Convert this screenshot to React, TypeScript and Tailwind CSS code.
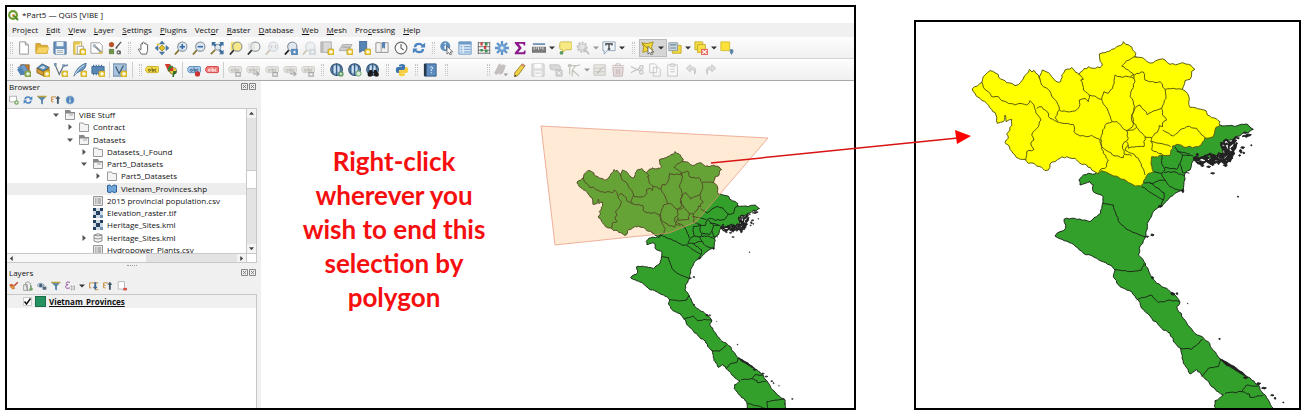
import React from "react";

/* ---------- map geometry ---------- */

const noise = (x: number, y: number) => {
  const s = Math.sin(x * 12.9898 + y * 78.233) * 43758.5453;
  return s - Math.floor(s) - 0.5;
};

/* Turns a coarse outline into a ragged, survey-like boundary. */
function rough(points: string, amount = 5, close = false): string {
  const p = points.trim().split(/\s+/).map((s) => s.split(",").map(Number));
  if (close) p.push(p[0]);
  let d = `M${p[0][0]},${p[0][1]}`;
  for (let i = 1; i < p.length; i++) {
    const [x0, y0] = p[i - 1];
    const [x1, y1] = p[i];
    const len = Math.hypot(x1 - x0, y1 - y0);
    const n = Math.max(1, Math.round(len / 8));
    for (let k = 1; k < n; k++) {
      const t = k / n;
      const o = noise(x0 + k * 3, y1 + k * 7) * amount;
      const x = x0 + (x1 - x0) * t - ((y1 - y0) / len) * o;
      const y = y0 + (y1 - y0) * t + ((x1 - x0) / len) * o;
      d += `L${x.toFixed(1)},${y.toFixed(1)}`;
    }
    d += `L${x1},${y1}`;
  }
  return close ? d + "Z" : d;
}

const NORTH =
  "37,176 52,168 66,157 70,140 82,128 90,122 105,128 115,134 122,147 140,158 165,167 182,157 190,147 200,132 208,118 216,126 222,121 228,130 240,148 241,135 247,120 258,125 275,140 295,157 302,155 305,135 315,120 335,113 345,125 357,133 368,122 385,110 400,115 420,113 427,102 419,85 418,72 435,68 455,58 470,50 482,46 490,35 497,43 510,48 517,58 528,70 524,80 530,82 550,84 562,95 580,98 600,88 615,90 630,103 655,102 668,98 685,103 705,118 695,124 690,148 675,152 667,178 682,190 688,208 690,232 712,236 738,242 742,255 762,264 780,275 780,287 768,292 760,320 735,324 728,336 715,350 680,352 650,343 638,348 630,376 610,376 575,380 573,402 580,425 560,437 550,460 542,468 520,465 490,448 455,435 440,427 425,422 415,432 395,420 380,405 360,400 345,385 320,380 300,385 285,395 270,402 265,420 255,422 245,412 230,408 222,400 205,400 195,388 175,385 165,375 150,358 145,345 135,337 145,325 140,312 150,300 155,280 155,268 138,275 135,255 130,275 112,280 108,255 95,238 80,220 60,205 45,190";

const SOUTH =
  "357,450 365,440 385,430 405,432 425,415 470,420 540,440 560,420 560,360 620,350 640,320 720,320 750,290 780,285 800,287 830,288 860,282 870,292 880,298 868,306 845,312 825,325 800,330 785,345 790,370 760,380 740,385 725,385 705,378 695,400 690,420 675,430 672,455 670,480 645,490 625,508 600,530 585,540 575,558 562,580 558,615 550,632 538,655 535,675 552,695 565,720 577,745 590,760 620,775 645,795 660,817 650,830 670,865 700,905 745,935 755,955 780,987 820,1010 855,1035 875,1050 895,1065 905,1085 925,1110 940,1135 963,1159 998,1182 1001,1220 1001,1260 824,1260 821,1190 786,1159 763,1130 765,1112 790,1095 755,1070 730,1040 710,1018 690,1032 670,1000 662,955 645,940 630,910 605,895 575,865 545,835 535,810 515,785 480,770 460,740 465,720 450,705 410,685 370,670 335,640 285,618 300,605 317,595 312,568 335,565 390,575 410,560 422,550 428,520 430,500 400,485 400,465 390,455 375,460 360,465";

const NORTH_BORDERS = [
  "66,157 70,172 85,185 95,200 115,200 125,212 145,220 165,225 180,220 200,225 210,212 222,225 228,250 243,270 235,290 215,315 222,330 212,342 222,358 200,365 197,390",
  "230,235 245,230 262,245 270,265 290,275 340,283 342,305 360,318 380,320 395,316 420,328 425,350 445,365 465,378 490,383 495,372 515,378",
  "240,148 245,165 265,178 275,198 290,215 298,240 285,262 293,275",
  "298,240 320,245 345,243 358,230 358,210 375,205 385,215 388,195 370,180 368,165 362,150 370,148 357,133",
  "388,195 405,198 425,208 430,222 445,245 457,275 440,280 428,300 422,325",
  "425,208 432,185 445,190 458,175 465,135 480,140 505,140 522,145 518,130 510,125 485,108 500,92 530,80",
  "522,145 525,155 515,180 510,200 520,215 522,235 515,255 520,275 518,290 500,302 485,290 470,275 457,275",
  "500,302 505,325 488,345 492,372 ",
  "512,140 530,130 550,126 555,150 585,158 600,155 615,178 618,205 605,235 580,243 562,255 552,240 540,225 525,235 516,255 515,270 530,292 555,320 575,323 595,300 597,287 608,290 610,275 620,270 607,255 605,235",
  "615,178 640,175 667,178",
  "608,300 640,318 660,300 680,290 710,295 725,315 735,324",
  "575,323 572,335 600,340 632,350",
  "575,335 575,360 610,376",
  "555,320 552,350 530,350 505,355 500,335",
  "505,345 495,360 515,370 535,385 545,410 555,435",
  "500,302 520,300 530,292",
  "422,325 425,350 430,370 445,390 440,410 420,420 415,432",
];

const SOUTH_BORDERS = [
  "428,520 460,525 468,555 480,580 505,600 540,615 558,622",
  "465,718 510,725 545,720 552,700",
  "545,470 575,490 610,510 600,530",
  "605,375 605,400 615,420 605,430 580,425",
  "615,412 650,418 660,400 668,375 655,365 645,350",
  "668,375 700,378",
  "660,402 668,428 688,430",
  "612,428 640,425 672,437",
  "605,430 615,450 630,470 650,478 670,480",
  "550,458 580,460 600,450 615,450",
  "570,458 600,480 612,488 610,510",
  "650,365 690,372",
  "530,810 575,795 595,817 630,810 660,815",
  "660,955 695,958 728,928",
  "725,1040 745,1015 775,1010 782,988",
  "795,1090 845,1085 860,1065 895,1068",
  "845,1085 868,1092 870,1102 910,1095",
  "824,1197 870,1209 916,1225 914,1190 995,1178",
];

/* x, y, width, height of the small offshore islands */
const ISLANDS = [
  [700, 380, 18, 12], [712, 392, 22, 14], [728, 378, 20, 16], [742, 388, 24, 20], [752, 372, 16, 14],
  [764, 384, 22, 12], [775, 372, 24, 16], [786, 392, 18, 10], [795, 378, 24, 18], [792, 356, 18, 18],
  [804, 364, 20, 18], [812, 350, 16, 12], [820, 340, 10, 16], [785, 335, 18, 12], [788, 348, 12, 10],
  [802, 340, 14, 8], [818, 328, 12, 8], [846, 316, 20, 6], [858, 312, 16, 6], [850, 306, 10, 4],
  [790, 402, 12, 8], [740, 408, 12, 5], [722, 404, 10, 6], [842, 350, 12, 6], [838, 358, 8, 12],
  [848, 366, 6, 6], [836, 374, 6, 5], [872, 344, 4, 4], [752, 428, 12, 4], [708, 370, 8, 8],
  [772, 396, 6, 8], [832, 498, 4, 4], [664, 478, 8, 10], [595, 526, 12, 6], [572, 612, 10, 6],
  [558, 618, 8, 4], [632, 788, 12, 8], [648, 788, 6, 6], [682, 820, 2, 2], [776, 925, 5, 4],
  [574, 740, 7, 7], [850, 1040, 14, 6], [890, 1058, 12, 6], [905, 1072, 14, 5], [932, 1094, 10, 4],
  [942, 1102, 6, 6], [968, 1116, 4, 3], [1028, 1176, 8, 4], [996, 1198, 4, 4],
];

const islandPath = ISLANDS.map(([x, y, w, h]) =>
  rough(`${x},${y + h / 2} ${x + w / 3},${y} ${x + w},${y + h / 3} ${x + w / 1.5},${y + h}`, 6, true),
).join("");

/* The crowded archipelago of the bay, drawn as tangled shorelines. */
const BAY = [
  "700,382 716,390 734,382 748,394 768,384 790,390 812,376 826,352 832,338",
  "708,394 730,398 752,402 772,394 800,398 812,388",
  "722,384 742,376 764,382 786,374 800,362 810,342 826,334",
  "784,336 786,352 798,358 794,374 812,368",
  "790,334 806,336 820,330 838,326",
];
const bayPath = BAY.map((b) => rough(b, 16)).join("");

const LAGOON = "780,987 800,997 822,1008 845,1026 858,1038 840,1030 815,1014 795,1003";

const northD = rough(NORTH, 6, true);
const southD = rough(SOUTH, 5, true);
const northLines = NORTH_BORDERS.map((b) => rough(b, 5)).join("");
const southLines = SOUTH_BORDERS.map((b) => rough(b, 4)).join("");

function Provinces({ transform, selected }: { transform: string; selected: boolean }) {
  return (
    <g transform={transform} strokeLinejoin="round">
      <path d={southD} fill="#33a02c" stroke="#1c2b1a" vectorEffect="non-scaling-stroke" />
      <path d={southLines} fill="none" stroke="#1c2b1a" vectorEffect="non-scaling-stroke" />
      <path
        d={northD}
        fill={selected ? "#ffff00" : "#33a02c"}
        stroke={selected ? "#5c5c10" : "#1c2b1a"}
        vectorEffect="non-scaling-stroke"
      />
      <path d={northLines} fill="none" stroke={selected ? "#5c5c10" : "#1c2b1a"} vectorEffect="non-scaling-stroke" />
      <path d={bayPath} fill="none" stroke="#222" strokeWidth="6" />
      <path d={islandPath} fill="#222" stroke="#222" strokeWidth="3" />
      <path d={rough(LAGOON, 2, true)} fill="#222" stroke="#222" strokeWidth="2" />
    </g>
  );
}

/* ---------- icons ---------- */

const Plus = ({ c = "#e9c832" }: { c?: string }) => (
  <g>
    <rect x="9" y="9" width="7" height="7" rx="1.5" fill={c} stroke="#a98c1c" strokeWidth=".6" />
    <path d="M12.5 10.3v4.4M10.3 12.5h4.4" stroke="#fff" strokeWidth="1.3" />
  </g>
);

const Lens = ({ fill = "#dfe7ef", ring = "#7d8a96", handle = "#8a7434" }: { fill?: string; ring?: string; handle?: string }) => (
  <g>
    <path d="M5.5 10.5 1 15.5" stroke={handle} strokeWidth="2" />
    <circle cx="9.5" cy="6.5" r="5.3" fill={fill} stroke={ring} strokeWidth="1.2" />
  </g>
);

const Tag = ({ fill, stroke = "#999", text = "#555" }: { fill: string; stroke?: string; text?: string }) => (
  <g>
    <path d="M0 7.5 2.5 4H14q1.5 0 1.5 1.5v4q0 1.5-1.5 1.5H2.5z" fill={fill} stroke={stroke} strokeWidth="1" />
    <circle cx="5" cy="8.3" r="1.2" fill="none" stroke={text} />
    <path d="M8 5v4.4M8 7.5h1.8v1.9H8M13 7h-1.700v2.400H13" stroke={text} fill="none" strokeWidth=".9" />
  </g>
);

const Globe = () => (
  <g>
    <circle cx="7.5" cy="7.5" r="6.7" fill="#7da2c6" stroke="#2d4d70" strokeWidth="1.2" />
    <path d="M7.500 1v13M3.500 2.500q-2 5 0 10M11.500 2.500q2 5 0 10" stroke="#23476d" fill="none" strokeWidth=".9" />
    <path d="M4.500 3h2v8h-2zM8.700 4h2v6h-2z" fill="#d3e3f1" />
  </g>
);

const Cursor = () => <path d="M8 6v9l2-2 1.500 3 1.600-.8L11.700 12.500h2.800z" fill="#fff" stroke="#444" strokeWidth=".8" />;

const icons: Record<string, React.ReactNode> = {
  New: <path d="M3 1h6.500l3.500 3.500V15H3zM9.500 1v3.500H13" fill="#fff" stroke="#8c8c8c" />,
  Open: (
    <>
      <path d="M1 3h5l1 2h7v9H1z" fill="#dcae37" stroke="#c29627" />
      <path d="M3.500 7H16l-2.500 7H1z" fill="#f6d365" stroke="#dcae37" strokeWidth=".6" />
    </>
  ),
  Save: (
    <>
      <path d="M1 1h14v14H2l-1-1z" fill="#6790bb" stroke="#4c7099" />
      <path d="M4 1h8v5H4zM3 9h10v6H3z" fill="#edf2f7" />
      <path d="M4.500 11h7M4.500 13h7" stroke="#9aa" />
    </>
  ),
  "New Print Layout": (
    <>
      <path d="M2 1h9v14H2z" fill="#fff8dc" stroke="#b99a2e" />
      <path d="M2 1h7v3H2zM2 4h2v11H2z" fill="#e6c548" />
      <path d="M6 6h7v9H6z" fill="#fff" stroke="#999" />
      <Plus />
    </>
  ),
  "Layout Manager": (
    <>
      <path d="M1 2h10l3 3v9H1z" fill="#fff" stroke="#999" />
      <path d="M5 5.500 13 13" stroke="#8b9299" strokeWidth="2.200" />
      <circle cx="5" cy="5.500" r="2" fill="#aeb6bd" />
      <path d="m9 13 4 2 2-3" fill="#e2bd3d" />
    </>
  ),
  "Style Manager": (
    <>
      <circle cx="4" cy="4" r="3" fill="#b8552c" />
      <path d="M15 1 9 8" stroke="#555" strokeWidth="1.500" />
      <path d="M1 9h6v6H1z" fill="#6f8f4c" />
      <path d="m8 9 2-2 1 1z" fill="#333" />
      <circle cx="12" cy="13" r="1.700" fill="none" stroke="#555" strokeWidth="1.200" />
      <path d="M14 11v4" stroke="#555" strokeWidth="1.200" />
    </>
  ),
  "Pan Map": (
    <path d="M5 15 1.500 9.500q.5-1.500 2.300.2L4.500 10V3.500q1-1.300 1.800 0V2q1-1.500 1.900 0v.8q1.200-1.200 2 .2v1q1.300-1 1.900.3V11l-1.300 4z" fill="#fff" stroke="#444" strokeWidth=".9" />
  ),
  "Pan to Selection": (
    <>
      <path d="M8 4.500 11.500 8 8 11.500 4.500 8z" fill="#e3c22f" stroke="#a58b18" />
      <path d="M8 0l3 3.500H5zM8 16l3-3.500H5zM0 8l3.500-3v6zM16 8l-3.500-3v6z" fill="#4b79ab" stroke="#2f5c8c" strokeWidth=".5" />
      <path d="M2 3h3v2H2z" fill="#e3c22f" />
    </>
  ),
  "Zoom In": (
    <>
      <Lens />
      <path d="M9.500 3.500v6M6.500 6.500h6" stroke="#2f69a5" strokeWidth="1.800" />
    </>
  ),
  "Zoom Out": (
    <>
      <Lens />
      <path d="M6.500 6.500h6" stroke="#2f69a5" strokeWidth="1.800" />
    </>
  ),
  "Zoom Full": (
    <>
      <path d="M1 15 6 10" stroke="#8a7434" strokeWidth="2" />
      <circle cx="9" cy="7" r="3.500" fill="#dfe7ef" stroke="#7d8a96" />
      <path d="M2 1h5L5.500 2.500l2 2-2 2-2-2L2 6zM15.500 1v5L14 4.500l-2 2-2-2 2-2L10.500 1zM15.500 15h-5l1.500-1.500-2-2 2-2 2 2 1.500-1.500z" fill="#3d6f9f" />
    </>
  ),
  "Zoom to Selection": (
    <>
      <path d="M2 1h10v10H2z" fill="#f4e16c" />
      <Lens fill="#f6e886" handle="#333" />
    </>
  ),
  "Zoom to Layer": (
    <>
      <Lens fill="#f1f1ee" handle="#333" />
      <path d="M1 2h8v8H1z" fill="#ddd" opacity=".6" />
    </>
  ),
  "Zoom to Native Resolution": (
    <g opacity=".35">
      <Lens />
      <path d="M7 4.500v4M9.500 5v.8M9.500 7.500v.8M12 4.500v4" stroke="#555" />
    </g>
  ),
  "Zoom Last": (
    <>
      <Lens handle="#222" />
      <path d="M8 9h8v7H8z" fill="#5b8bbd" />
      <path d="m13 10.500-3 2 3 2z" fill="#fff" />
    </>
  ),
  "Zoom Next": (
    <g opacity=".35">
      <Lens />
      <path d="M8 9h8v7H8z" fill="#9ab" />
      <path d="m11 10.500 3 2-3 2z" fill="#fff" />
    </g>
  ),
  "New Map View": (
    <>
      <path d="M1 1h12v12H1z" fill="#d9d9d9" stroke="#aaa" />
      <path d="M1 1h3v12H1z" fill="#bbb" />
      <Plus />
    </>
  ),
  "New 3D Map View": (
    <>
      <path d="M4 4h11l-4 7H0z" fill="#cfcfcf" stroke="#aaa" />
      <path d="M4 7h9" stroke="#999" />
      <Plus />
    </>
  ),
  "New Bookmark": (
    <>
      <path d="M3 0h8v13l-4-2.500L3 13z" fill="#5684b4" stroke="#3f6a98" />
      <Plus />
    </>
  ),
  "Show Bookmarks": (
    <>
      <path d="M1 2h5l2 1 2-1h5v11H1z" fill="#f2f2f2" stroke="#8a8a8a" />
      <path d="M8 1h3.500v8L9.700 7.500 8 9z" fill="#5684b4" />
      <path d="M7 3v10" stroke="#999" />
    </>
  ),
  "Temporal Controller": (
    <>
      <circle cx="8" cy="8" r="6.700" fill="#fafafa" stroke="#6c6c6c" strokeWidth="1.300" />
      <path d="M8 3.500V8l3 2.500" stroke="#555" fill="none" strokeWidth="1.200" />
    </>
  ),
  Refresh: (
    <>
      <path d="M2 7q.5-5 6-5 3 0 4.500 2L15 2v5.500H9.500L11 6Q10 4.500 8 4.500 5 4.500 4.800 7z" fill="#4b84c0" />
      <path d="M14 9q-.5 5-6 5-3 0-4.500-2L1 14V8.500h5.500L5 10q1 1.500 3 1.500 3 0 3.200-2.500z" fill="#4b84c0" />
    </>
  ),
  "Identify Features": (
    <>
      <circle cx="6" cy="6" r="5.700" fill="#5f8fbf" />
      <path d="M6 5v4.500M6 2.300v1.500" stroke="#fff" strokeWidth="1.700" />
      <Cursor />
    </>
  ),
  "Open Attribute Table": (
    <>
      <path d="M1 1h14v14H1z" fill="#dcebf8" stroke="#5f8fbf" />
      <path d="M1 1h14v3H1z" fill="#6c9bc8" />
      <path d="M3 6.500h2M3 9.500h2M3 12.500h2M7 6.500h7M7 9.500h7M7 12.500h7" stroke="#5f8fbf" />
    </>
  ),
  "Statistical Summary": (
    <>
      <path d="M1.500 1v14M14.500 1v14M1 2h14M1 14h14M1 6.500h14M1 10.500h14" stroke="#666" fill="none" />
      <path d="M4 1.500h2.500V5H4zM8 5.500h2.500V9H8z" fill="#cc3b3b" />
      <path d="M9 1.500h3V5H9zM4 9h2.500v3H4zM9 10h3v3H9z" fill="#3b8c4e" />
    </>
  ),
  Toolbox: (
    <>
      <path d="M8 0v16M0 8h16M2.300 2.300l11.400 11.400M13.700 2.300 2.300 13.700" stroke="#5d92c9" strokeWidth="2.600" />
      <circle cx="8" cy="8" r="4.700" fill="#6f9fd0" />
      <circle cx="8" cy="8" r="2" fill="#dfeaf5" />
    </>
  ),
  "Show Statistics": <path d="M2 1h12v4h-1.500q-.3-1.800-2-1.800H6.500L10 8l-4 4.800h5q1.700 0 2-2H14.500L14 15H2v-1.500L6.500 8 2 2.500z" fill="#8c1a8c" />,
  "Measure Line": (
    <>
      <path d="M1 3.500h14" stroke="#3f6a98" strokeWidth="1.500" />
      <path d="M0 7h16v6H0z" fill="#7d7d7d" stroke="#555" strokeWidth=".6" />
      <path d="M2.500 7v3M5 7v2M7.500 7v3M10 7v2M12.500 7v3" stroke="#eee" />
    </>
  ),
  "Map Tips": (
    <>
      <path d="M4 1h10q2 0 2 2v5q0 2-2 2H9l-4 3 .5-3H4Q2 10 2 8V3q0-2 2-2z" fill="#f5ea83" stroke="#c8b640" />
      <circle cx="4" cy="13.500" r="2.200" fill="#5d9960" />
    </>
  ),
  "Run Feature Action": (
    <g opacity=".4">
      <circle cx="7" cy="7" r="5" fill="none" stroke="#777" strokeWidth="2.500" strokeDasharray="2.500 1.200" />
      <circle cx="7" cy="7" r="3.500" fill="#ccc" stroke="#888" />
      <path d="m9 9 6 6" stroke="#777" strokeWidth="2" />
    </g>
  ),
  "Text Annotation": (
    <>
      <path d="M1 1h14v10H6l-3.500 4V11H1z" fill="#eef4f9" stroke="#8aa0b3" />
      <path d="M4.500 5V3.300h7V5M8 3.300v6M6.500 9.300h3" stroke="#333" strokeWidth="1.400" fill="none" />
    </>
  ),
  "Select Features": (
    <>
      <path d="M1 2l6 1 7-2-2 6 2 6-6-2-6 2 1-6z" fill="#f2d936" stroke="#a38d1d" />
      <path d="M2 3l9 9" stroke="#8a761a" />
      <Cursor />
    </>
  ),
  "Select by Value": (
    <>
      <path d="M5 5h10v9H5z" fill="#f2da3c" stroke="#c3a92a" />
      <path d="M1 2h10v9H1z" fill="#cfd6da" stroke="#8793a0" />
      <path d="M2.500 4.500h7M2.500 8h7" stroke="#6a87a3" strokeWidth="1.400" />
    </>
  ),
  "Deselect Features": (
    <>
      <path d="M1 1h9v9H1z" fill="#f5df45" stroke="#c3a92a" />
      <path d="M4 4h9v9H4z" fill="#f5df45" stroke="#c3a92a" />
      <path d="M8 9h8v7H8z" fill="#e66a5d" />
      <path d="m9.500 10.500 5 4M14.500 10.500l-5 4" stroke="#fff" strokeWidth="1.300" />
    </>
  ),
  "Select by Location": (
    <>
      <path d="M1 1h10v10H1z" fill="#fbe13a" stroke="#d3ba2c" />
      <path d="M13 9q2.500 0 2.500 2.300 0 1.700-2.500 4.700-2-3-2-4.700Q11 9 13 9z" fill="#5d86a8" />
    </>
  ),
  "Data Source Manager": (
    <>
      <path d="M4 2h10v9H4z" fill="#c07a2e" stroke="#6f4a1c" strokeWidth=".7" />
      <path d="m1 5 7-3.500 6 9L7 13z" fill="#6f9cc8" stroke="#3f6a98" strokeWidth=".6" />
      <path d="M0 7 5 5l5 8-6 1z" fill="#4f82b5" />
      <Plus c="#7cae55" />
    </>
  ),
  "New GeoPackage Layer": (
    <>
      <path d="m1 6 6-5 8 4-6 5z" fill="#5c8db8" stroke="#37597a" />
      <path d="M1 6v5l8 4v-5zM9 10l6-5v5l-6 5z" fill="#cf9c35" stroke="#7a5a1a" strokeWidth=".8" />
      <path d="m4 5 4-2 3 2-3 2z" fill="#fff" opacity=".7" />
      <Plus />
    </>
  ),
  "New Shapefile Layer": (
    <>
      <path d="M1 1.500 6 13 11 3h4" stroke="#5f6d7a" fill="none" strokeWidth="1.300" />
      <path d="M0 0h3v3H0zM9.500 1.500h3v3h-3zM14 1.500h2v2h-2z" fill="#7795b3" />
      <Plus />
    </>
  ),
  "New SpatiaLite Layer": (
    <>
      <path d="M1 15Q4 4 15 0q0 7-6 9T1 15z" fill="#6c97c2" stroke="#466d96" />
      <path d="M2 13Q6 6 13 2" stroke="#dce8f3" fill="none" />
      <Plus />
    </>
  ),
  "New Memory Layer": (
    <>
      <path d="M3 2v12M6 2v12M9 2v12M12 2v12" stroke="#4c7099" strokeWidth="1.400" />
      <path d="M1 4h14v8H1z" fill="#5886b5" stroke="#3f6a98" />
      <Plus />
    </>
  ),
  "New Virtual Layer": (
    <>
      <path d="M0 1h15v14H0z" fill="#a9c4dc" stroke="#55789b" />
      <path d="M3 4 7 12l5-9" stroke="#3b5a78" fill="none" strokeWidth="1.400" />
      <Plus />
    </>
  ),
  "Layer Labeling": <Tag fill="#f6e04a" stroke="#c8ac22" text="#554a10" />,
  "Layer Diagram": (
    <>
      <path d="M1 1 7 1l3 7-5 2z" fill="#d33a2c" />
      <path d="M6 3h4l1 8H7L4 8z" fill="#2f8a34" />
      <circle cx="10.500" cy="9" r="4" fill="#f1cf3b" stroke="#444" strokeWidth=".6" />
      <path d="M10.500 9V5a4 4 0 0 0-4 4z" fill="#c7352b" />
      <path d="M10.500 9h4a4 4 0 0 1-3 4v3h-2z" fill="#2c6f2e" />
    </>
  ),
  "Pin Labels": (
    <>
      <Tag fill="#a8cbea" stroke="#5687b5" text="#2d567f" />
      <circle cx="12" cy="12.500" r="3" fill="#c93434" />
    </>
  ),
  "Show Unplaced Labels": <Tag fill="#f07b7b" stroke="#d23b3b" text="#fff" />,
  "Web Add": (
    <>
      <Globe />
      <circle cx="12.500" cy="12.500" r="3" fill="#4d9154" />
      <path d="M12.500 10.800v3.400M10.800 12.500h3.400" stroke="#fff" />
    </>
  ),
  "Web Search": (
    <>
      <Globe />
      <circle cx="12" cy="12" r="3" fill="#d4ead2" stroke="#5e9a60" />
    </>
  ),
  "Web Browse": (
    <>
      <Globe />
      <path d="M4 8h3v2h2V8h3l2 6H9v-3H7.500v3H2z" fill="#1c1c1c" />
      <circle cx="4.500" cy="13" r="2.700" fill="#1c1c1c" />
      <circle cx="12" cy="13" r="2.700" fill="#1c1c1c" />
    </>
  ),
  "Python Console": (
    <>
      <path d="M8 1q3.500 0 3.500 2v3.500q0 1.500-1.500 1.500H6q-1.500 0-1.500 2v1.500H3q-2 0-2-3.500t2-3.500h5V4H4.500V3Q4.500 1 8 1z" fill="#3f76ad" />
      <path d="M8 15q-3.500 0-3.500-2V9.500Q4.500 8 6 8h4q1.500 0 1.500-2V4.500H13q2 0 2 3.500t-2 3.500H8v.5h3.500v1Q11.500 15 8 15z" fill="#f5ce42" />
    </>
  ),
  "Help Contents": (
    <>
      <path d="M2 1h13v14H2z" fill="#5c8cc0" stroke="#33597f" />
      <path d="M1 1h3v14H1z" fill="#26384c" />
      <path d="M8 5.500Q8.300 4.500 9.500 4.500q1.500 0 1.500 1.300 0 1-1.500 1.900v1.500M9.500 10.500v1.200" stroke="#fff" fill="none" />
    </>
  ),
  "Current Edits": (
    <g opacity=".45">
      <path d="M6 1 1 11l1 2 3-1 4-9zM10 2 6 11l1 2 3-2 3-8z" fill="#8b7c7c" stroke="#8b7c7c" />
      <path d="M11 12h5l-2.500 3z" fill="#333" />
    </g>
  ),
  "Toggle Editing": (
    <>
      <path d="M11.500 1 15 3 7 14l-4 2V11.500z" fill="#efd047" stroke="#93802b" />
      <path d="m3 16 .5-2.500L5 14.500z" fill="#333" />
      <path d="m11.500 1 3 2-1 1.500-3-2z" fill="#d8838b" />
    </>
  ),
  "Save Edits": (
    <g opacity=".4">
      <path d="M1 1h14v14H1z" fill="#bbb" stroke="#888" />
      <path d="M4 1h8v5H4zM4 9h8v6H4z" fill="#fff" />
      <path d="M5 11.500h6" stroke="#777" />
    </g>
  ),
  "Add Feature": (
    <g opacity=".4">
      <path d="M1 2h9q3 0 3 3v3H5Q1 8 1 5z" fill="#aaa" stroke="#777" />
      <path d="M8 8h7v7H8z" fill="#999" stroke="#777" />
      <path d="m9.500 9.500 4 4m0-4-4 4" stroke="#fff" />
    </g>
  ),
  "Vertex Tool": (
    <g opacity=".4" fill="none" stroke="#776" strokeWidth="1.300">
      <path d="M2 3h10l3-1M6 15V8l4-5M6 8l8 7M3 5v8" />
      <circle cx="3" cy="3" r="1.500" />
    </g>
  ),
  "Modify Attributes": (
    <g opacity=".42">
      <path d="M1 2h13v12H1z" fill="#d6d0c0" stroke="#888" />
      <path d="M1 6h13M1 10h13" stroke="#888" />
      <path d="M14 2 6 12l-2 1 1-3z" fill="#777" />
    </g>
  ),
  "Delete Selected": (
    <g opacity=".45">
      <path d="M2 5h12l-1 10H3z" fill="#d9bcbc" stroke="#876a6a" />
      <path d="M1 3h14M5.500 3V1h5v2M6 7v6M8 7v6M10 7v6" stroke="#876a6a" fill="none" />
    </g>
  ),
  "Cut Features": (
    <g opacity=".4" fill="none" stroke="#666" strokeWidth="1.200">
      <path d="M1 4l10 5M1 11l10-5" />
      <circle cx="13" cy="5" r="2" />
      <circle cx="13" cy="10.500" r="2" />
    </g>
  ),
  "Copy Features": <path opacity=".35" d="M2 1h6l2 2v8H2zM6 5h6l2 2v8H6z" fill="#fff" stroke="#666" />,
  "Paste Features": <path opacity=".35" d="M2 2h11v13H2zM5 1h5v3H5zM5 7h5M5 10h5" fill="#fff" stroke="#666" />,
  Undo: <path opacity=".4" d="M6 2 1.500 6 6 10V7.500q6-1 5 5.500 4-9-5-8.500z" fill="#bbb" stroke="#777" />,
  Redo: <path opacity=".4" d="m10 2 4.500 4L10 10V7.500q-6-1-5 5.500-4-9 5-8.500z" fill="#bbb" stroke="#777" />,
  "Add Layers": (
    <>
      <path d="M1 2h11v9H1z" fill="#fff" stroke="#888" />
      <circle cx="12" cy="12" r="3.500" fill="#6fa65f" />
      <path d="M12 10v4M10 12h4" stroke="#fff" />
    </>
  ),
  Filter: (
    <>
      <path d="M0 2h15L9.500 8.500V15l-3-1.500v-5z" fill="#5b86b1" />
      <path d="M0 1h15v2.500H1.500z" fill="#b7a53c" />
    </>
  ),
  "Collapse All": (
    <>
      <path d="M1 3h7M1 3v8h3M1 7h3" stroke="#c28a35" strokeWidth="1.500" fill="none" />
      <path d="M11 1 15 6h-2.500v8h-3V6H7z" fill="#40566c" />
    </>
  ),
  "Expand All": (
    <>
      <path d="M1 3h14M1 3v8h3M9 14h6" stroke="#c28a35" strokeWidth="1.500" fill="none" />
      <path d="M10 14 6 9h2.500V2h3v7H14z" fill="#40668c" />
    </>
  ),
  "Enable Properties": (
    <>
      <circle cx="8" cy="8" r="6.500" fill="#5186bd" stroke="#a8c1da" />
      <path d="M8 7v5M8 4v1.700" stroke="#fff" strokeWidth="1.800" />
    </>
  ),
  "Open Layer Styling": (
    <>
      <path d="M1 6q4-2 6 1l2 5q-5 3-8-6z" fill="#e09642" stroke="#b86a24" />
      <path d="m8 8 6-6" stroke="#c4503a" strokeWidth="2.500" />
      <path d="M2 6h5v2H2z" fill="#d84c35" />
    </>
  ),
  "Add Group": (
    <>
      <path d="M1 6h6v9H1zM4 3l4-2 4 3v11H7z" fill="#eee" stroke="#777" />
      <path d="M13 7v8M10 13h6" stroke="#629a52" strokeWidth="1.800" />
    </>
  ),
  "Manage Map Themes": (
    <>
      <path d="M0 7q6-7 12 0-6 6-12 0z" fill="#cfdce8" stroke="#66798b" />
      <circle cx="6" cy="7" r="2.700" fill="#3b5d7e" />
      <path d="M9 9h6v5H9z" fill="#53677b" />
    </>
  ),
  "Filter by Expression": (
    <>
      <path d="M8 2Q2 0 2 4q0 2 3 2-4 0-4 3 0 4 7 2" fill="none" stroke="#93579c" strokeWidth="1.600" />
      <path d="M9 8h2v6H9M13 8h2v6h-2" fill="none" stroke="#888" strokeWidth="1.200" />
    </>
  ),
  "Remove Layer": (
    <>
      <path d="M2 1h10v12H2z" fill="#fff" stroke="#999" />
      <path d="M10 11h6v4h-6z" fill="#d9534a" />
    </>
  ),
};

const GRAY_TAGS = ["Highlight Labels", "Show/Hide Labels", "Move Label", "Rotate Label", "Change Label"];
GRAY_TAGS.forEach((name, i) => {
  icons[name] = (
    <g opacity=".6">
      <Tag fill="#d8d6d0" stroke="#b5b3ad" text="#8b8880" />
      <path d={i % 2 ? "M8 12.500h7M12 10l3 2.500-3 2.500" : "M9 11h5v4H9z"} fill="none" stroke="#777" strokeWidth="1.300" />
    </g>
  );
});

/* ---------- toolbar parts ---------- */

function Tool({ name, small = false }: { name: string; small?: boolean }) {
  return (
    <button type="button" aria-label={name} className="flex h-4 w-4 shrink-0 items-center justify-center">
      <svg viewBox="0 0 16 16" className={small ? "h-[10px] w-[10px]" : "h-[14px] w-[14px]"} aria-hidden="true">
        {icons[name]}
      </svg>
    </button>
  );
}

function Tools({ names, className }: { names: string[]; className: string }) {
  return (
    <div className={`flex shrink-0 justify-between ${className}`}>
      {names.map((n) => (
        <Tool key={n} name={n} />
      ))}
    </div>
  );
}

function Handle({ className }: { className: string }) {
  return (
    <div className={`flex shrink-0 justify-center ${className}`}>
      <span className="h-3 w-[3px] border-x border-dotted border-[#c4c4c4]" />
    </div>
  );
}

function Divider({ className }: { className: string }) {
  return (
    <div className={`flex shrink-0 justify-center ${className}`}>
      <span className="h-4 w-px bg-[#cfcfcf]" />
    </div>
  );
}

function Drop({ label, faded = false }: { label: string; faded?: boolean }) {
  return (
    <button type="button" aria-label={label} className="mx-[2px] flex w-[6px] shrink-0 items-center">
      <svg viewBox="0 0 6 4" className="h-1 w-[6px]" aria-hidden="true">
        <path d="M0 .5h6L3 3.500z" fill={faded ? "#999" : "#333"} />
      </svg>
    </button>
  );
}

const MENU = ["Project", "Edit", "View", "Layer", "Settings", "Plugins", "Vector", "Raster", "Database", "Web", "Mesh", "Processing", "Help"];
const ACCEL: Record<string, number> = { Project: 3, Vector: 4, Processing: 3 };

function MenuBar() {
  return (
    <nav className="flex h-[14px] items-center gap-2 bg-[#f0f0f0] pl-[5px] text-[8px] text-[#111]">
      {MENU.map((m) => {
        const i = ACCEL[m] ?? 0;
        return (
          <button key={m} type="button" className="whitespace-nowrap">
            {m.slice(0, i)}
            <span className="underline">{m[i]}</span>
            {m.slice(i + 1)}
          </button>
        );
      })}
    </nav>
  );
}

/* ---------- dock panels ---------- */

type Kind = "folder" | "open" | "shape" | "csv" | "raster" | "db";
type Row = { pad: string; label: string; kind: Kind; arrow?: "down" | "right"; active?: boolean };

const ROWS: Row[] = [
  { pad: "pl-[45px]", label: "VIBE Stuff", kind: "open", arrow: "down" },
  { pad: "pl-[59px]", label: "Contract", kind: "folder", arrow: "right" },
  { pad: "pl-[59px]", label: "Datasets", kind: "open", arrow: "down" },
  { pad: "pl-[73px]", label: "Datasets_I_Found", kind: "folder", arrow: "right" },
  { pad: "pl-[73px]", label: "Part5_Datasets", kind: "open", arrow: "down" },
  { pad: "pl-[87px]", label: "Part5_Datasets", kind: "folder", arrow: "right" },
  { pad: "pl-[87px]", label: "Vietnam_Provinces.shp", kind: "shape", active: true },
  { pad: "pl-[73px]", label: "2015 provincial population.csv", kind: "csv" },
  { pad: "pl-[73px]", label: "Elevation_raster.tif", kind: "raster" },
  { pad: "pl-[73px]", label: "Heritage_Sites.kml", kind: "raster" },
  { pad: "pl-[73px]", label: "Heritage_Sites.kml", kind: "db", arrow: "right" },
  { pad: "pl-[73px]", label: "Hydropower_Plants.csv", kind: "csv" },
];

const KIND_ICON: Record<Kind, React.ReactNode> = {
  folder: <path d="M.5 1h4l1 1.500h4v7h-9z" fill="#f3f3f3" stroke="#999" />,
  open: (
    <>
      <path d="M.5 1h4l1 1.500h4v7h-9z" fill="#f3f3f3" stroke="#999" />
      <path d="M0 0h5l1 2h4v1.500H0z" fill="#888" />
      <path d="M4 5h4" stroke="#aaa" />
    </>
  ),
  shape: <path d="M.5 1.500 3 1l1.500 1.500L7 1l2.500.5V8L7 8.500 5 7.500l-2 1.200L.5 8z" fill="#6fa5d8" stroke="#2f6399" />,
  csv: (
    <>
      <path d="M.5.5h9v9h-9z" fill="#e4e4e4" stroke="#999" />
      <path d="M2 3h1.500M4.500 3H8M2 5h1.500M4.500 5H8M2 7h1.500M4.500 7H8" stroke="#888" />
    </>
  ),
  raster: (
    <>
      <path d="M0 0h10v10H0z" fill="#cfdae4" />
      <path d="M0 0h3v3H0zM3 3h4v4H3zM7 0h3v3H7zM0 7h3v3H0z" fill="#23405f" />
      <path d="M7 7h3v3H7z" fill="#6e93b5" />
    </>
  ),
  db: <path d="M1 2q4-2.500 8 0v6q-4 2.500-8 0zM1 2q4 2 8 0M1 5q4 2 8 0" fill="#f4f4f4" stroke="#8c8c8c" />,
};

function TreeRow({ row }: { row: Row }) {
  return (
    <li className={`flex min-h-0 flex-1 items-center ${row.pad} ${row.active ? "bg-[#ededed]" : ""}`}>
      <svg viewBox="0 0 8 8" className="mr-[5px] h-2 w-2 shrink-0" aria-hidden="true">
        {row.arrow === "down" && <path d="M1 2.500h6L4 6z" fill="#555" />}
        {row.arrow === "right" && <path d="M2.500 1 6 4 2.500 7z" fill="#555" />}
      </svg>
      <svg viewBox="0 0 10 10" className="mr-1 h-[10px] w-[10px] shrink-0" aria-hidden="true">
        {KIND_ICON[row.kind]}
      </svg>
      <span className="whitespace-nowrap leading-3">{row.label}</span>
    </li>
  );
}

function PanelTitle({ title }: { title: string }) {
  return (
    <div className="flex h-[11px] items-center justify-between pl-[2px] pr-[1px] text-[8px] text-[#111]">
      <h2>{title}</h2>
      <div className="flex gap-[1px]">
        {["Float", "Close"].map((n) => (
          <button key={n} type="button" aria-label={`${n} ${title}`} className="h-[7px] w-[7px]">
            <svg viewBox="0 0 7 7" className="h-[7px] w-[7px]" aria-hidden="true">
              <path d="M.5.5h6v6h-6zM2 2l3 3M5 2 2 5" fill="#eee" stroke="#777" strokeWidth=".9" />
            </svg>
          </button>
        ))}
      </div>
    </div>
  );
}

function ScrollArrow({ d, label, className }: { d: string; label: string; className: string }) {
  return (
    <button type="button" aria-label={label} className={`flex shrink-0 items-center justify-center bg-[#f4f4f4] ${className}`}>
      <svg viewBox="0 0 6 6" className="h-[5px] w-[5px]" aria-hidden="true">
        <path d={d} fill="#444" />
      </svg>
    </button>
  );
}

function Docks() {
  return (
    <aside className="flex w-[254px] shrink-0 flex-col bg-[#f0f0f0] pr-1 text-[#111]">
      <PanelTitle title="Browser" />
      <div className="flex h-4 items-center">
        {["Add Layers", "Refresh", "Filter", "Collapse All", "Enable Properties"].map((n) => (
          <div key={n} className="flex w-[14px] justify-center">
            <Tool name={n} small />
          </div>
        ))}
      </div>
      <div className="flex h-[146px] border-y border-r border-[#c8c8c8] bg-white">
        <div className="h-[144px] flex-1 overflow-hidden text-[8px]">
          <ul className="flex h-[147px] flex-col">
            {ROWS.map((r, i) => (
              <TreeRow key={i} row={r} />
            ))}
          </ul>
        </div>
        <div className="flex w-[10px] shrink-0 flex-col border-l border-[#c8c8c8] bg-[#e3e3e3]">
          <ScrollArrow label="Scroll up" d="M0 4.500h6L3 1z" className="h-[9px] w-full" />
          <div className="flex-[52]" />
          <div className="flex-[18] border-y border-[#ccc] bg-white" />
          <div className="flex-[55]" />
          <ScrollArrow label="Scroll down" d="M0 1.500h6L3 5z" className="h-[9px] w-full" />
        </div>
      </div>
      <div className="flex h-[9px] border-b border-r border-[#c8c8c8] bg-[#e3e3e3]">
        <ScrollArrow label="Scroll left" d="M4.500 0v6L1 3z" className="w-[9px]" />
        <div className="flex-[130] bg-[#f8f8f8]" />
        <div className="flex-[91]" />
        <ScrollArrow label="Scroll right" d="M1.500 0v6L5 3z" className="w-[9px]" />
        <div className="w-[10px] border-l border-[#c8c8c8] bg-white" />
      </div>
      <div className="flex h-1 items-center justify-center">
        <span className="w-[10px] border-t border-dotted border-[#999]" />
      </div>
      <PanelTitle title="Layers" />
      <div className="flex h-4 items-center">
        {["Open Layer Styling", "Add Group", "Manage Map Themes", "Filter", "Filter by Expression"].map((n) => (
          <div key={n} className="flex w-[14px] justify-center">
            <Tool name={n} small />
          </div>
        ))}
        <Drop label="Expression options" />
        {["Expand All", "Collapse All", "Remove Layer"].map((n) => (
          <div key={n} className="flex w-[14px] justify-center">
            <Tool name={n} small />
          </div>
        ))}
      </div>
      <div className="flex-1 border-r border-t border-[#c8c8c8] bg-white">
        <label className="flex h-[13px] items-center bg-[#f0f0f0] pl-4 text-[8px] font-bold">
          <span className="relative mr-[3px] flex h-[9px] w-[9px]">
            <input type="checkbox" defaultChecked className="peer h-[9px] w-[9px] appearance-none border border-[#ccc] bg-white" />
            <svg viewBox="0 0 9 9" className="pointer-events-none absolute inset-0 hidden h-[9px] w-[9px] peer-checked:block" aria-hidden="true">
              <path d="M1.500 4.500 3.500 7 7.500 1.500" fill="none" stroke="#111" strokeWidth="1.400" />
            </svg>
          </span>
          <span className="mr-[3px] h-[11px] w-[11px] border border-[#1d6b49] bg-[#259361]" />
          <span className="underline">Vietnam_Provinces</span>
        </label>
      </div>
    </aside>
  );
}

/* ---------- windows ---------- */

function Toolbars() {
  return (
    <div className="border-b border-[#a8a8a8]">
      <div className="flex h-[22px] items-center border-b border-[#d4d4d4] bg-linear-to-b from-[#fdfdfd] to-[#f0f0f0]">
        <Handle className="w-[9px]" />
        <Tools className="w-[107px]" names={["New", "Open", "Save", "New Print Layout", "Layout Manager", "Style Manager"]} />
        <Handle className="w-[13px]" />
        <Tools
          className="w-[291px]"
          names={["Pan Map", "Pan to Selection", "Zoom In", "Zoom Out", "Zoom Full", "Zoom to Selection", "Zoom to Layer", "Zoom to Native Resolution", "Zoom Last", "Zoom Next", "New Map View", "New 3D Map View", "New Bookmark", "Show Bookmarks", "Temporal Controller", "Refresh"]}
        />
        <Handle className="w-3" />
        <Tools className="w-[89px]" names={["Identify Features", "Open Attribute Table", "Statistical Summary", "Toolbox", "Show Statistics"]} />
        <div className="w-[3px]" />
        <Tool name="Measure Line" />
        <Drop label="Measure options" />
        <Tools className="w-[34px]" names={["Map Tips", "Run Feature Action"]} />
        <Drop label="Action options" faded />
        <Tool name="Text Annotation" />
        <Drop label="Annotation options" />
        <Handle className="w-3" />
        <div className="flex h-[18px] items-center border border-[#bbb] bg-[#d6d6d6]">
          <Tool name="Select Features" />
          <Drop label="Selection options" />
        </div>
        <Tool name="Select by Value" />
        <Drop label="Value selection options" />
        <Tool name="Deselect Features" />
        <Drop label="Deselect options" />
        <Tool name="Select by Location" />
      </div>
      <div className="flex h-[21px] items-center bg-linear-to-b from-[#fdfdfd] to-[#f0f0f0]">
        <Handle className="w-[9px]" />
        <Tools className="w-[90px]" names={["Data Source Manager", "New GeoPackage Layer", "New Shapefile Layer", "New SpatiaLite Layer", "New Memory Layer"]} />
        <Divider className="w-[6px]" />
        <Tool name="New Virtual Layer" />
        <Divider className="w-2" />
        <Handle className="w-2" />
        <Tools className="w-[35px]" names={["Layer Labeling", "Layer Diagram"]} />
        <Divider className="w-[7px]" />
        <Tools className="w-[34px]" names={["Pin Labels", "Show Unplaced Labels"]} />
        <Divider className="w-[7px]" />
        <Tools className="w-[89px]" names={GRAY_TAGS} />
        <Handle className="w-[13px]" />
        <Tools className="w-[52px]" names={["Web Add", "Web Search", "Web Browse"]} />
        <Handle className="w-[13px]" />
        <Tool name="Python Console" />
        <Handle className="w-3" />
        <Tool name="Help Contents" />
        <Handle className="mr-[30px] w-4" />
        <Handle className="w-[9px]" />
        <Tools className="w-[89px]" names={["Current Edits", "Toggle Editing", "Save Edits", "Add Feature", "Vertex Tool"]} />
        <Drop label="Vertex options" faded />
        <Tools className="w-[126px]" names={["Modify Attributes", "Delete Selected", "Cut Features", "Copy Features", "Paste Features", "Undo", "Redo"]} />
      </div>
    </div>
  );
}

function AppWindow() {
  return (
    <section className="flex min-w-0 flex-[847] flex-col overflow-hidden border-2 border-black bg-white">
      <header className="flex h-4 items-center gap-[3px] pl-[1px] text-[8px] text-[#111]">
        <svg viewBox="0 0 12 12" className="h-[11px] w-[11px]" aria-hidden="true">
          <circle cx="5.500" cy="5.500" r="4.200" fill="#fff" stroke="#6c9c2f" strokeWidth="2.400" />
          <path d="m5.500 5.500 5.500 5.500" stroke="#4f8a2a" strokeWidth="2.200" />
          <path d="m4.500 4.500 3 .3-2.700 2.700z" fill="#ec7a2d" />
        </svg>
        <h1>*Part5 — QGIS [VIBE ]</h1>
      </header>
      <MenuBar />
      <Toolbars />
      <div className="flex min-h-0 flex-1">
        <Docks />
        <div className="relative flex-1 overflow-hidden bg-white">
          <svg className="absolute inset-0 h-full w-full" role="img" aria-label="Map of northern Vietnam with a selection polygon">
            <Provinces transform="translate(308 63) scale(.21645)" selected={false} />
            <path d="M280 45 507 57 435 141 408 152 294 164z" fill="#ffab57" fillOpacity=".25" stroke="#e8937a" strokeOpacity=".7" />
          </svg>
          <p className="relative ml-[33px] mt-[63px] w-[200px] text-center font-['Lato'] text-[26px] font-bold leading-[34px] text-[#f50f0f]">
            Right-click
            <br />
            wherever you
            <br />
            wish to end this
            <br />
            selection by
            <br />
            polygon
          </p>
        </div>
      </div>
    </section>
  );
}

export default function App() {
  return (
    <main className="relative flex min-h-screen bg-white pt-[5px] pr-[6px] pb-1 pl-[5px] font-['Open_Sans','Noto_Sans',sans-serif]">
      <AppWindow />
      <section className="relative mt-[15px] ml-[58px] min-w-0 flex-[383] overflow-hidden border-2 border-black bg-white">
        <svg className="absolute inset-0 h-full w-full" role="img" aria-label="Map of northern Vietnam with the chosen provinces highlighted">
          <Provinces transform="translate(44 8) scale(.33333)" selected />
        </svg>
      </section>
      <svg className="pointer-events-none absolute inset-0 h-full w-full" aria-hidden="true">
        <path d="M711 163 958 138" stroke="#d81414" strokeWidth="1.500" />
        <path d="M955 130 971 136 957 144z" fill="#ff0000" />
      </svg>
    </main>
  );
}
